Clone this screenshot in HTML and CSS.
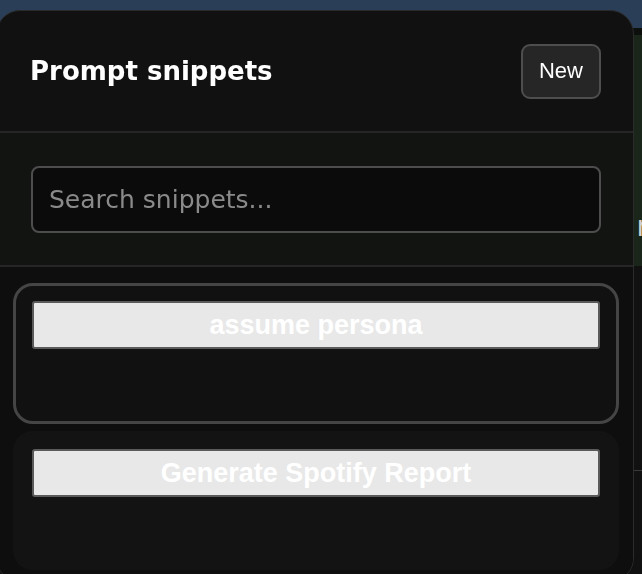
FILE: index.html
```html
<!DOCTYPE html>
<html lang="en">
<head>
<meta charset="utf-8">
<title>Prompt snippets</title>
<link rel="stylesheet" href="styles.css">
</head>
<body>
<div class="app">
  <div class="topbar"></div>
  <div class="gap-row"></div>
  <div class="main">
    <div class="main-upper"><span class="peek">r</span></div>
    <div class="main-lower"><div class="rule"></div></div>
  </div>
</div>
<div class="panel">
  <header class="panel-header">
    <h2 class="panel-title">Prompt snippets</h2>
    <button class="btn-new">New</button>
  </header>
  <div class="search">
    <input class="search-input" type="text" placeholder="Search snippets...">
  </div>
  <div class="list">
    <div class="card card-active">
      <button class="snippet-btn">assume persona</button>
      <div class="card-body"></div>
    </div>
    <div class="card">
      <button class="snippet-btn">Generate Spotify Report</button>
      <div class="card-body card-body-last"></div>
    </div>
  </div>
</div>
</body>
</html>
```

FILE: styles.css
```css
* { box-sizing: border-box; }
html, body { margin: 0; padding: 0; height: 100%; }
body {
  background: #111111;
  font-family: "DejaVu Sans", sans-serif;
  overflow: hidden;
}
.app {
  display: flex;
  flex-direction: column;
  height: 100%;
}
.topbar { height: 28px; background: #2a3f57; }
.gap-row { height: 7px; background: #0d0f0d; }
.main { flex: 1; display: flex; flex-direction: column; }
.main-upper {
  height: 231px;
  background: #192619;
  display: flex;
  justify-content: flex-end;
  align-items: flex-end;
  padding-bottom: 25px;
}
.peek {
  font-family: "DejaVu Sans", sans-serif;
  font-size: 28px;
  line-height: 1;
  color: #cfcfcf;
  margin-right: -6px;
}
.main-lower { flex: 1; background: #111111; padding-top: 204px; }
.rule { height: 1px; background: #3a3a3a; }

.panel {
  position: fixed;
  top: 10px;
  left: -4px;
  width: 638px;
  height: 572px;
  background: #111111;
  border: 1px solid #2b2b2b;
  border-radius: 24px;
  overflow: hidden;
  display: flex;
  flex-direction: column;
}
.panel-header {
  height: 122px;
  flex: none;
  display: flex;
  align-items: center;
  justify-content: space-between;
  padding: 0 32px 0 33px;
  border-bottom: 2px solid #262626;
}
.panel-title {
  margin: 0;
  font-family: "DejaVu Sans", sans-serif;
  font-weight: 700;
  font-size: 26px;
  color: #ffffff;
}
.btn-new {
  width: 80px;
  height: 55px;
  background: #262626;
  border: 2px solid #4e4e4e;
  border-radius: 9px;
  color: #ffffff;
  font-family: "Liberation Sans", Arial, sans-serif;
  font-size: 22px;
  padding: 0;
}
.search {
  flex: none;
  height: 134px;
  padding: 33px 32px 0 34px;
  background: #121412;
  border-bottom: 2px solid #262626;
}
.search-input {
  display: block;
  width: 100%;
  height: 67px;
  background: #0b0b0b;
  border: 2px solid #4d4d4d;
  border-radius: 8px;
  padding: 0 16px;
  font-family: "DejaVu Sans", sans-serif;
  font-size: 25px;
  color: #dddddd;
  outline: none;
}
.search-input::placeholder { color: #8a8a8a; }
.list {
  flex: 1;
  background: #0e0e0e;
  padding: 16px 14px 0 16px;
  display: flex;
  flex-direction: column;
  gap: 7px;
}
.card {
  background: #131313;
  border: 3px solid #131313;
  border-radius: 20px;
  padding: 15px 16px 0 16px;
}
.card-active {
  background: #111111;
  border-color: #454545;
}
.snippet-btn {
  display: block;
  width: 100%;
  height: 48px;
  background: #e8e8e8;
  border: 2px solid #5a5a5a;
  border-radius: 3px;
  color: #ffffff;
  font-family: "Liberation Sans", Arial, sans-serif;
  font-weight: 700;
  font-size: 27px;
  padding: 0;
}
.card-body { height: 72px; }
.card-body-last { height: 70px; }
```
